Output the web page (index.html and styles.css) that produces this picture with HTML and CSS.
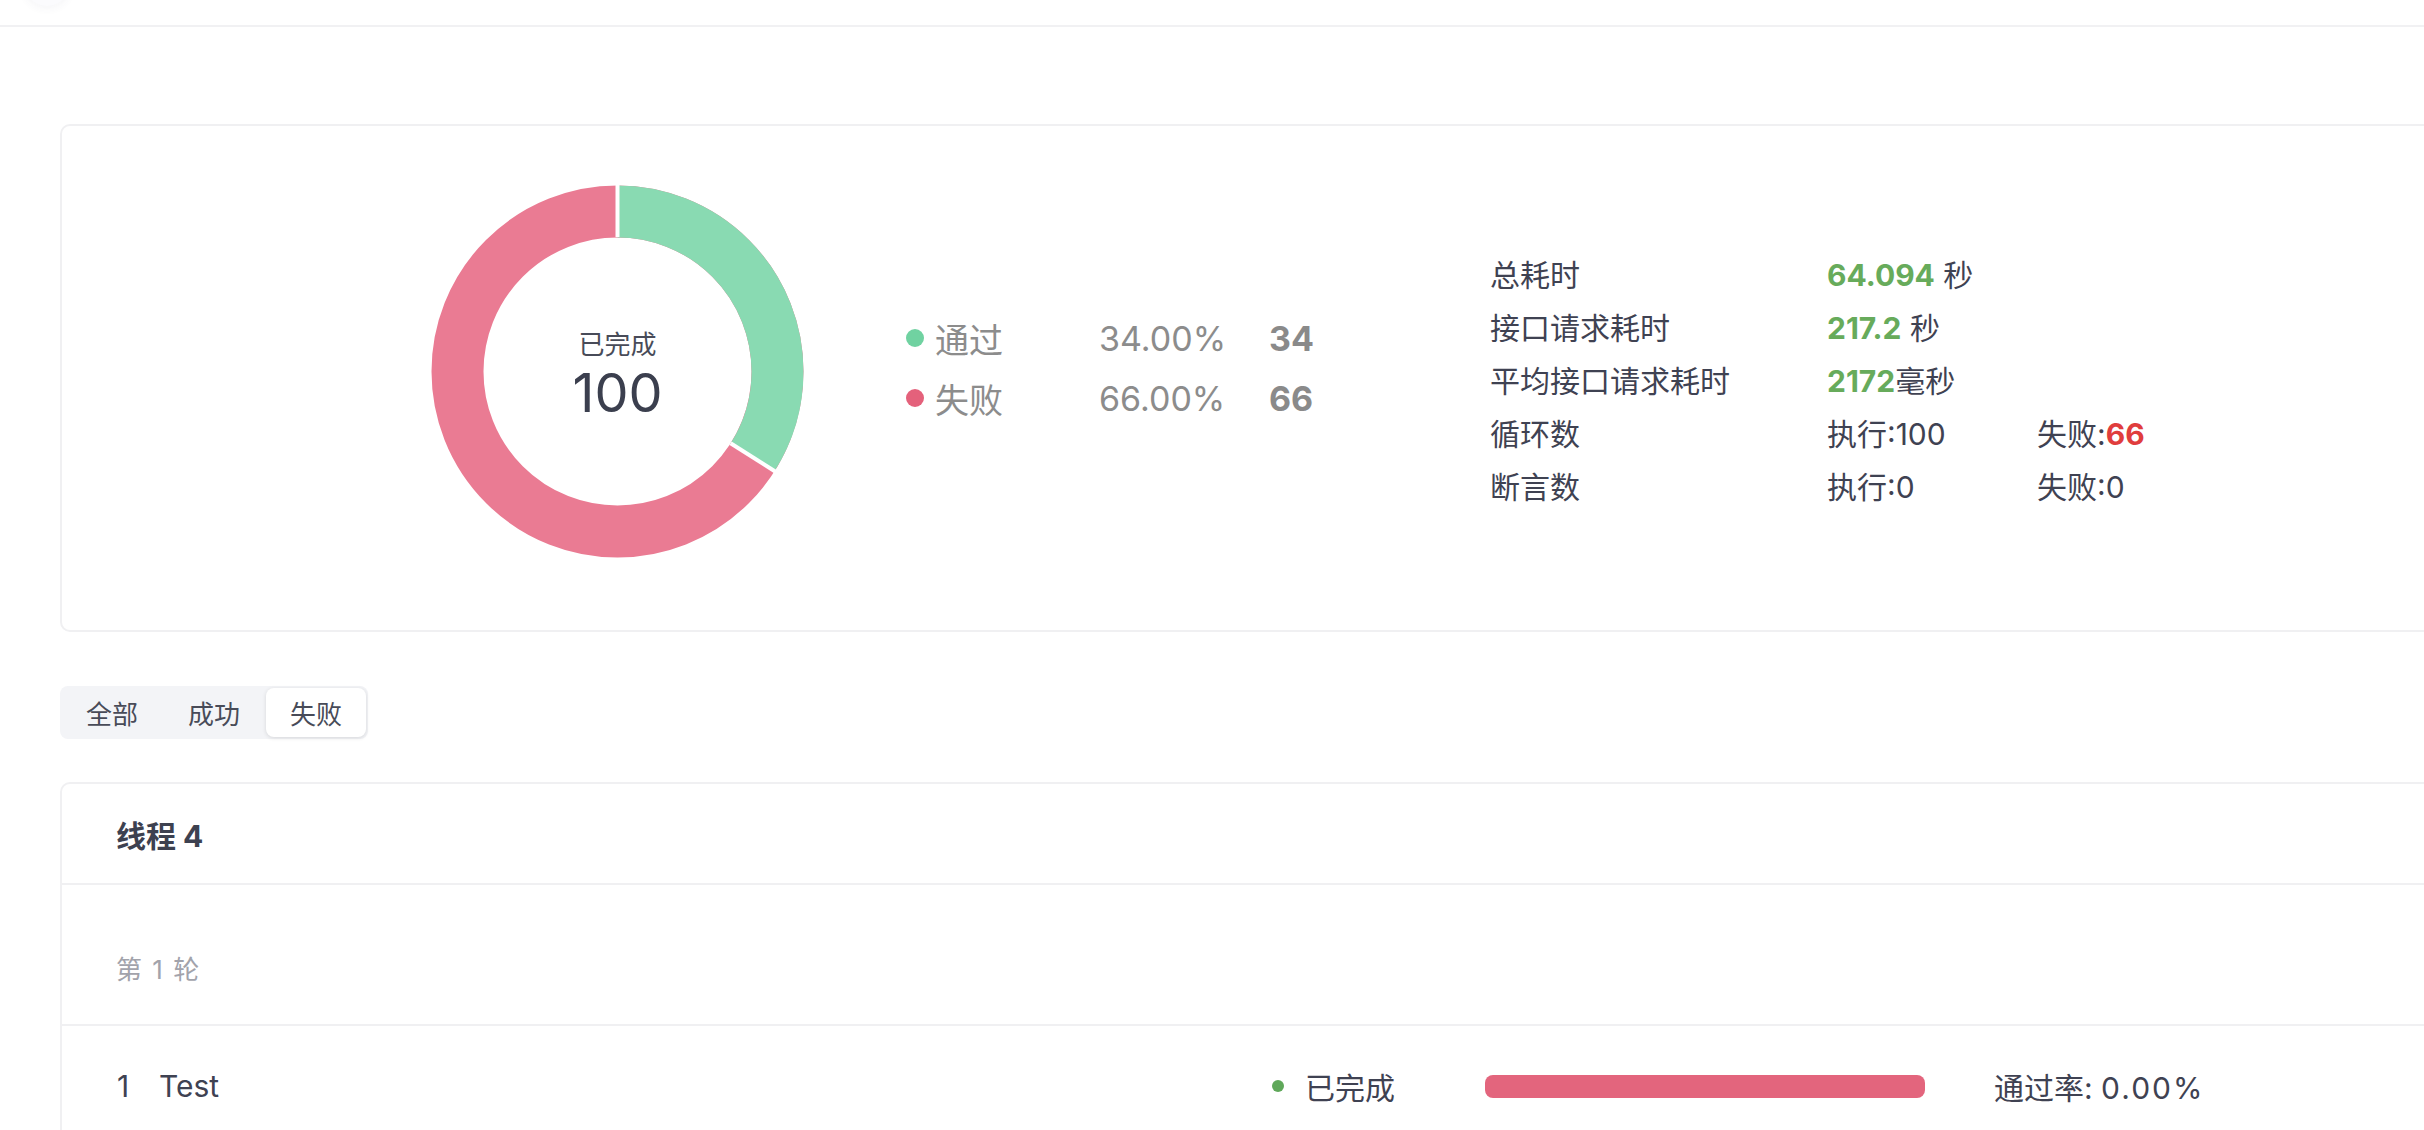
FILE: index.html
```html
<!DOCTYPE html>
<html lang="zh-CN">
<head>
<meta charset="utf-8">
<title>测试报告</title>
<link rel="stylesheet" href="styles.css">
</head>
<body>
<div class="topbar">
  <div class="avatar"></div>
</div>
<main class="page">
  <section class="card summary">
    <div class="donut">
      <svg class="donut-svg" width="373" height="373" viewBox="0 0 373 373">
        <circle cx="186.5" cy="186.5" r="160" fill="none" stroke="#ea7b93" stroke-width="52"/>
        <circle cx="186.5" cy="186.5" r="160" fill="none" stroke="#89dab2" stroke-width="52" stroke-dasharray="341.8 1005.3" transform="rotate(-90 186.5 186.5)"/>
        <line x1="186.5" y1="52" x2="186.5" y2="-2" stroke="#fff" stroke-width="4"/>
        <line x1="299.6" y1="258.3" x2="347" y2="288.3" stroke="#fff" stroke-width="4"/>
      </svg>
      <div class="donut-center">
        <div class="donut-label">已完成</div>
        <div class="donut-value">100</div>
      </div>
    </div>
    <div class="legend">
      <span class="dot dot-pass"></span><span class="legend-name">通过</span><span class="legend-pct">34.00%</span><span class="legend-count">34</span>
      <span class="dot dot-fail"></span><span class="legend-name">失败</span><span class="legend-pct">66.00%</span><span class="legend-count">66</span>
    </div>
    <div class="stats">
      <span class="stat-label">总耗时</span><span class="stat-val"><b class="green">64.094</b> 秒</span><span></span>
      <span class="stat-label">接口请求耗时</span><span class="stat-val"><b class="green">217.2</b> 秒</span><span></span>
      <span class="stat-label">平均接口请求耗时</span><span class="stat-val"><b class="green">2172</b>毫秒</span><span></span>
      <span class="stat-label">循环数</span><span class="stat-val">执行:100</span><span class="stat-val">失败:<b class="red">66</b></span>
      <span class="stat-label">断言数</span><span class="stat-val">执行:0</span><span class="stat-val">失败:0</span>
    </div>
  </section>

  <div class="segmented">
    <div class="seg-item">全部</div>
    <div class="seg-item">成功</div>
    <div class="seg-item active">失败</div>
  </div>

  <section class="card thread">
    <div class="thread-head">线程 4</div>
    <div class="round">第 1 轮</div>
    <div class="case-row">
      <span class="case-no">1</span>
      <span class="case-name">Test</span>
      <span class="case-status"><span class="status-dot"></span>已完成</span>
      <span class="bar"><span class="bar-pass" style="width:0%"></span></span>
      <span class="case-rate">通过率: <span class="rate-num">0.00%</span></span>
    </div>
  </section>
</main>
</body>
</html>
```
FILE: styles.css
```css
html, body {
  margin: 0;
  padding: 0;
  overflow: hidden;
  background: #ffffff;
}
body {
  font-family: "Inter", "Noto Sans CJK SC", sans-serif;
  color: #3f4252;
  width: 2424px;
  height: 1130px;
}
.topbar {
  height: 25px;
  border-bottom: 2px solid #f1f1f3;
  display: flex;
  padding-left: 24px;
  overflow: hidden;
}
.avatar {
  width: 46px;
  height: 46px;
  margin-top: -40px;
  border-radius: 50%;
  background: #fbfbfd;
  box-shadow: 0 2px 10px rgba(60, 60, 100, 0.06);
}
.page {
  padding: 97px 0 0 60px;
}
.card {
  width: 2440px;
  border: 2px solid #f0f0f2;
  border-radius: 10px;
  background: #fff;
  box-sizing: border-box;
}
.summary {
  display: flex;
  align-items: center;
  height: 508px;
  padding: 59px 0 72px 369px;
}
.donut {
  position: relative;
  width: 373px;
  height: 373px;
  flex: none;
}
.donut-svg {
  display: block;
}
.donut-center {
  position: absolute;
  inset: 0;
  display: flex;
  flex-direction: column;
  align-items: center;
  justify-content: center;
  padding-top: 8px;
  box-sizing: border-box;
}
.donut-label {
  font-size: 26px;
  line-height: 34px;
  color: #484b58;
}
.donut-value {
  font-size: 54px;
  line-height: 62px;
  color: #3b3f4e;
}
.legend {
  margin-left: 102px;
  margin-top: -7px;
  display: grid;
  grid-template-columns: 18px 175px 170px 60px;
  align-items: center;
  grid-auto-rows: 60px;
  color: #8c8c8c;
  font-size: 34px;
  width: 423px;
  flex: none;
}
.dot {
  width: 18px;
  height: 18px;
  border-radius: 50%;
}
.dot-pass { background: #70d2a1; }
.dot-fail { background: #e4617b; }
.legend-name {
  padding-left: 11px;
}
.legend-count {
  font-weight: 700;
  color: #8a8a8a;
}
.stats {
  margin-left: 161px;
  margin-top: 15px;
  display: grid;
  grid-template-columns: 337px 210px auto;
  grid-auto-rows: 53px;
  align-items: center;
  font-size: 30px;
  color: #3f4252;
  flex: none;
}
.stat-val b {
  font-weight: 700;
}
.green { color: #67ab5b; }
.red { color: #e03d3d; }

.segmented {
  margin-top: 54px;
  display: inline-flex;
  gap: 2px;
  padding: 2px;
  background: #f3f4f7;
  border-radius: 8px;
}
.seg-item {
  width: 100px;
  height: 49px;
  display: flex;
  align-items: center;
  justify-content: center;
  font-size: 26px;
  color: #484b58;
  border-radius: 8px;
}
.seg-item.active {
  background: #fff;
  box-shadow: 0 1px 4px rgba(0, 0, 0, 0.12);
}

.thread {
  margin-top: 43px;
  height: 400px;
}
.thread-head {
  height: 99px;
  border-bottom: 2px solid #f0f0f2;
  display: flex;
  align-items: center;
  padding-left: 54px;
  font-size: 30px;
  font-weight: 700;
  color: #3d4150;
}
.round {
  height: 141px;
  box-sizing: border-box;
  padding: 67px 0 0 54px;
  line-height: 36px;
  font-size: 26px;
  word-spacing: 3px;
  color: #a2a3ab;
  border-bottom: 2px solid #f0f0f2;
}
.case-row {
  height: 120px;
  display: flex;
  align-items: center;
  padding-left: 55px;
  font-size: 30px;
  color: #3f4252;
}
.case-no {
  width: 42px;
}
.case-name {
  width: 1113px;
}
.case-status {
  width: 213px;
  display: flex;
  align-items: center;
  gap: 21px;
}
.status-dot {
  width: 12px;
  height: 12px;
  border-radius: 50%;
  background: #5fa85a;
}
.bar {
  width: 440px;
  height: 23px;
  border-radius: 8px;
  background: #e3657d;
  overflow: hidden;
  display: flex;
}
.bar-pass {
  background: #67ab5b;
}
.case-rate {
  margin-left: 69px;
}
.rate-num {
  letter-spacing: 2px;
}
```
